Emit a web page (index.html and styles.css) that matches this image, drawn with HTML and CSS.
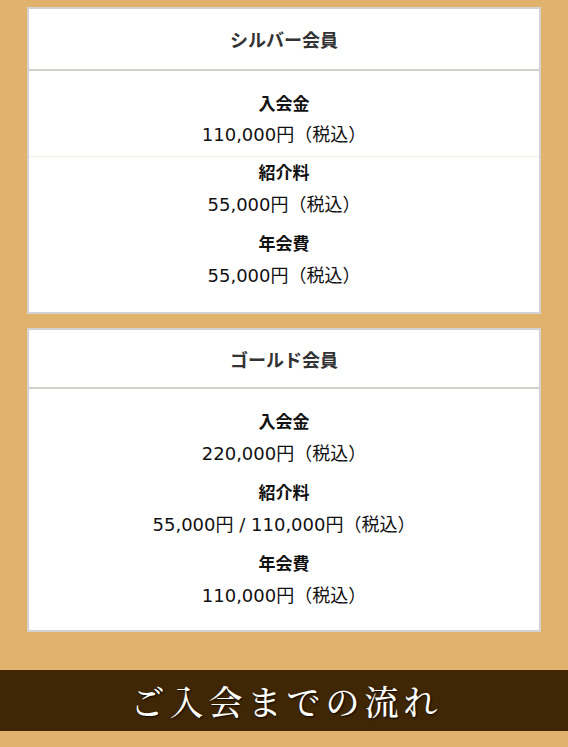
FILE: index.html
```html
<!DOCTYPE html>
<html lang="ja">
<head>
<meta charset="utf-8">
<link rel="stylesheet" href="styles.css">
</head>
<body>
<main class="page">
  <section class="card card-silver">
    <h2 class="card-head">シルバー会員</h2>
    <div class="card-body">
      <div class="item item-sep">
        <div class="label">入会金</div>
        <div class="price">110,000円（税込）</div>
      </div>
      <div class="item item-after-sep">
        <div class="label">紹介料</div>
        <div class="price">55,000円（税込）</div>
      </div>
      <div class="item">
        <div class="label">年会費</div>
        <div class="price">55,000円（税込）</div>
      </div>
    </div>
  </section>
  <section class="card card-gold">
    <h2 class="card-head">ゴールド会員</h2>
    <div class="card-body">
      <div class="item">
        <div class="label">入会金</div>
        <div class="price">220,000円（税込）</div>
      </div>
      <div class="item">
        <div class="label">紹介料</div>
        <div class="price">55,000円 / 110,000円（税込）</div>
      </div>
      <div class="item">
        <div class="label">年会費</div>
        <div class="price">110,000円（税込）</div>
      </div>
    </div>
  </section>
</main>
<div class="banner">
  <h2 class="banner-title">ご入会までの流れ</h2>
</div>
</body>
</html>
```
FILE: styles.css
```css
html, body {
  margin: 0;
  padding: 0;
}
body {
  background: #e1b26c;
  font-family: "Noto Sans CJK JP", "Noto Sans", sans-serif;
  color: #111;
  height: 747px;
  overflow: hidden;
}
.page {
  padding: 7px 27px 0;
  display: flex;
  flex-direction: column;
  gap: 14px;
}
.card {
  background: #fff;
  border: 2px solid #d2d2d2;
}
.card-head {
  margin: 0;
  height: 60px;
  display: flex;
  align-items: center;
  justify-content: center;
  font-size: 18px;
  font-weight: 700;
  color: #333;
  border-bottom: 2px solid #d3cfc9;
}
.card-gold .card-head {
  height: 57px;
}
.card-body {
  padding: 17px 0 19px;
  display: flex;
  flex-direction: column;
  gap: 8px;
}
.card-silver .card-body {
  padding-bottom: 21px;
}
.item {
  display: flex;
  flex-direction: column;
  align-items: center;
  gap: 3px;
}
.item-sep {
  padding-bottom: 6px;
  border-bottom: 1px solid #f2ece3;
  gap: 2px;
}
.item-after-sep {
  margin-top: -8px;
}
.label {
  font-size: 17px;
  font-weight: 700;
  line-height: 30px;
  color: #111;
}
.price {
  font-family: "DejaVu Sans", "Noto Sans CJK JP", sans-serif;
  font-size: 18px;
  line-height: 30px;
  color: #111;
}
.banner {
  margin-top: 38px;
  background: #3f2604;
  height: 61px;
  display: flex;
  align-items: center;
  justify-content: center;
}
.banner-title {
  margin: 0;
  font-family: "Noto Serif CJK JP", "Noto Sans CJK JP", serif;
  font-size: 34px;
  font-weight: 500;
  letter-spacing: 5px;
  color: #fff;
  text-shadow: 1px 1px 2px rgba(0,0,0,0.8);
  padding-left: 5px;
}
```
